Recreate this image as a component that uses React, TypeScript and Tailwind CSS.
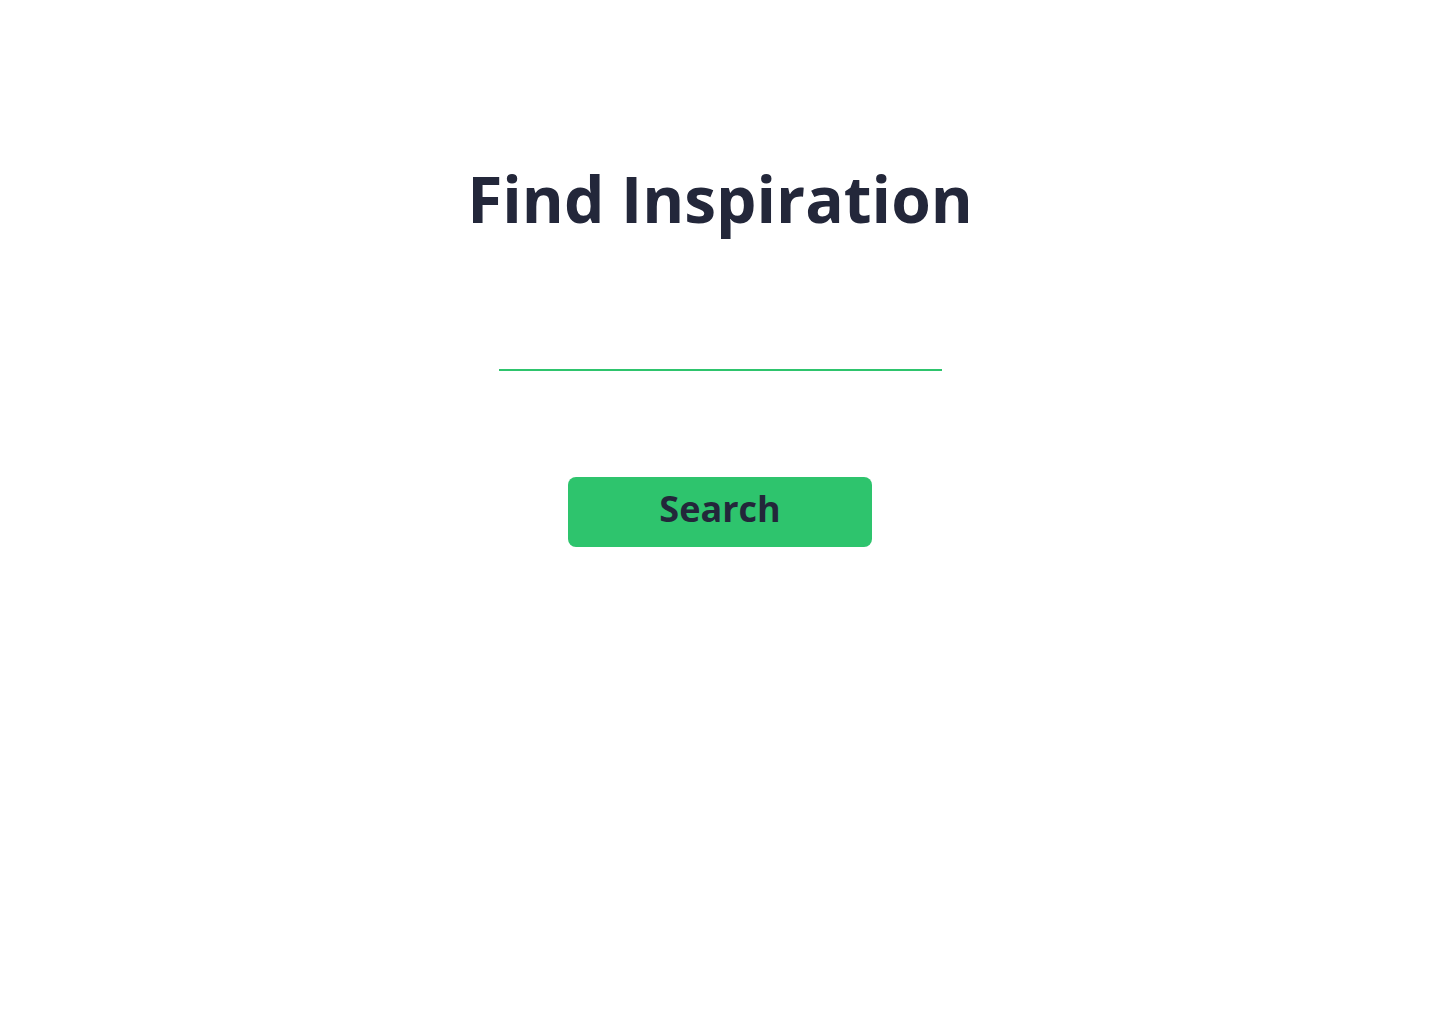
import React from "react";

export default function App() {
  return (
    <div className="min-h-screen w-full bg-white flex flex-col items-center" style={{ fontFamily: '"Open Sans", sans-serif' }}>
      <h1 className="mt-[151px] text-[64px] leading-[96px] font-bold text-[#23273a]">Find Inspiration</h1>
      <input
        type="text"
        className="mt-[72px] w-[443px] h-[52px] border-0 border-b-2 border-[#2ec46d] outline-none bg-transparent text-[24px] text-[#23273a] text-center"
      />
      <button className="mt-[106px] w-[304px] h-[70px] rounded-[8px] bg-[#2ec46d] text-[#23273a] text-[36px] font-bold leading-none pb-[6px]">
        Search
      </button>
    </div>
  );
}
